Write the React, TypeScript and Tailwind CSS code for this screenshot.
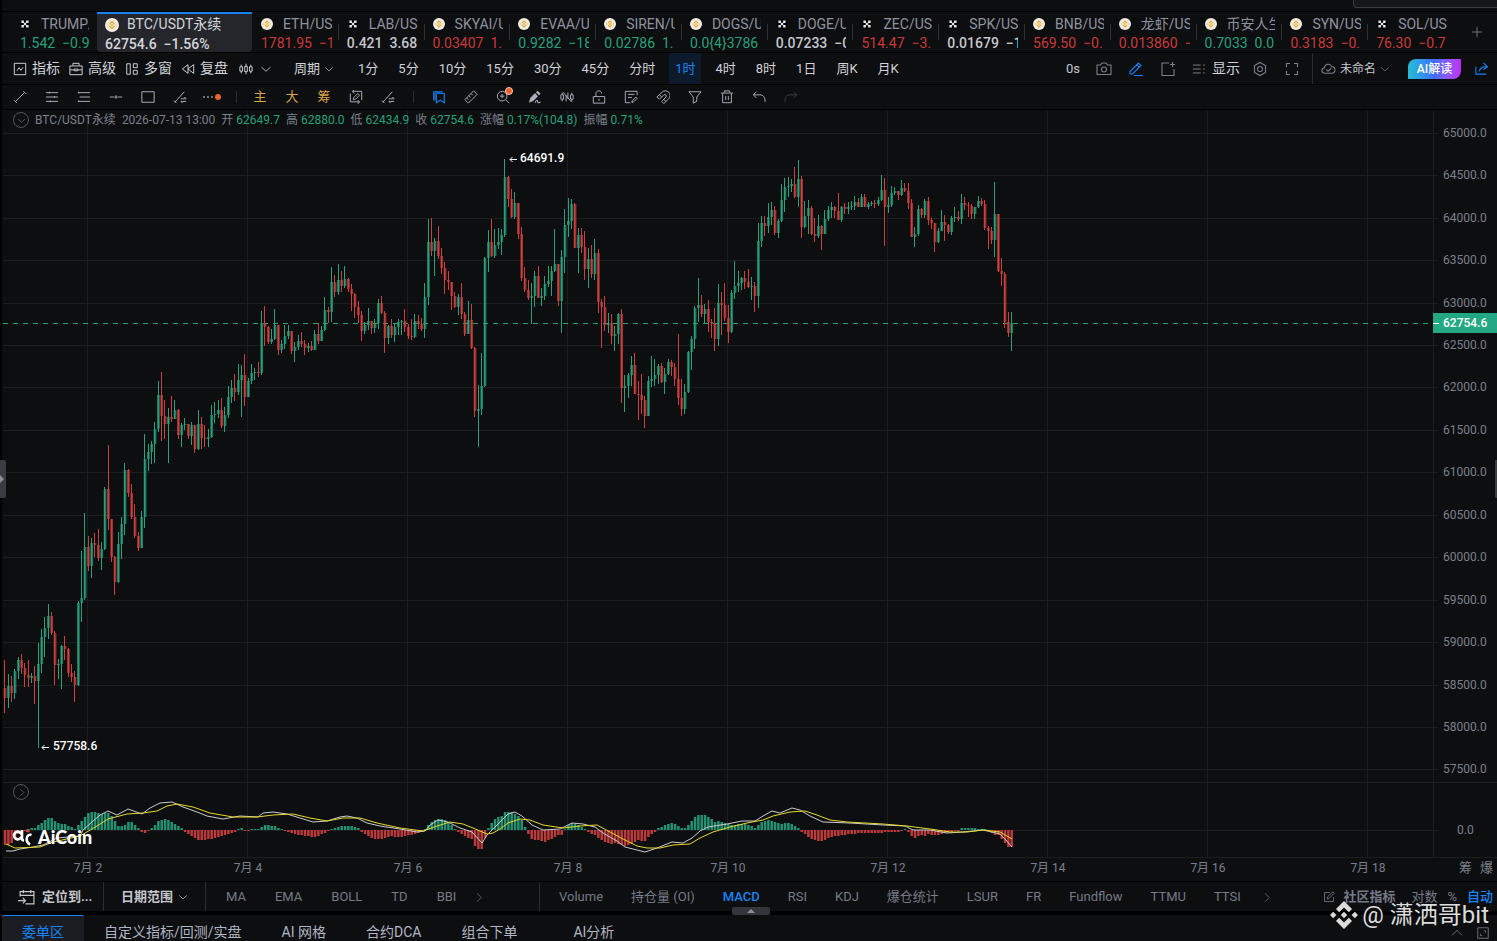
import React from 'react';
import clsx from 'clsx';

const UP = '#26a17b';
const DOWN = '#cf3f3f';
const GRID = '#1b1d20';

// close, high, low of every hourly candle on the plot's y axis; each candle opens at the previous close
const FIRST_OPEN = 688;
const CANDLES = [
  698, 660, 713, 686, 674, 708, 693, 676, 702, 671, 669, 699, 660, 657, 679, 668, 654, 674, 675, 663, 687, 678, 660, 687,
  676, 673, 683, 681, 666, 704, 664, 643, 748, 637, 629, 673, 628, 617, 657, 616, 604, 639, 633, 612, 635, 665, 631, 685,
  664, 659, 679, 646, 645, 689, 649, 636, 660, 673, 648, 677, 677, 664, 682, 685, 671, 702, 603, 601, 686, 598, 551, 622,
  547, 513, 600, 566, 536, 571, 543, 538, 578, 545, 533, 557, 558, 529, 561, 549, 542, 570, 489, 487, 550, 519, 445, 530,
  557, 519, 562, 582, 556, 595, 544, 532, 583, 524, 517, 559, 470, 463, 535, 493, 469, 497, 517, 484, 519, 536, 504, 538,
  548, 532, 551, 517, 511, 548, 459, 434, 528, 452, 444, 471, 444, 441, 464, 429, 422, 463, 395, 381, 432, 416, 372, 441,
  424, 400, 439, 417, 408, 463, 419, 396, 422, 410, 400, 419, 435, 409, 439, 425, 423, 447, 424, 418, 430, 436, 424, 439,
  425, 422, 445, 449, 425, 453, 424, 410, 450, 438, 417, 449, 439, 425, 447, 437, 429, 447, 415, 405, 438, 414, 402, 423,
  410, 400, 418, 426, 398, 428, 415, 407, 432, 397, 386, 418, 388, 380, 403, 392, 374, 401, 380, 364, 395, 375, 365, 417,
  397, 354, 406, 381, 378, 397, 373, 364, 384, 372, 368, 380, 373, 362, 377, 323, 311, 375, 327, 306, 346, 342, 326, 344,
  339, 329, 344, 325, 309, 340, 350, 325, 355, 344, 340, 353, 336, 325, 349, 331, 325, 339, 351, 331, 354, 347, 342, 362,
  341, 335, 350, 344, 332, 347, 348, 340, 355, 346, 343, 352, 350, 341, 351, 334, 330, 350, 341, 323, 344, 330, 326, 341,
  310, 297, 331, 312, 307, 323, 282, 267, 322, 292, 275, 297, 280, 264, 295, 286, 271, 292, 279, 266, 288, 289, 278, 292,
  294, 284, 311, 307, 293, 318, 315, 301, 323, 331, 311, 341, 325, 322, 334, 321, 308, 330, 328, 321, 334, 323, 319, 333,
  303, 299, 329, 313, 296, 314, 338, 311, 353, 326, 325, 344, 335, 319, 338, 327, 323, 342, 322, 319, 335, 321, 320, 335,
  327, 309, 332, 336, 324, 339, 337, 319, 340, 321, 314, 338, 324, 315, 329, 329, 318, 331, 297, 283, 338, 242, 219, 305,
  251, 218, 256, 241, 238, 276, 256, 226, 259, 268, 248, 274, 280, 262, 294, 282, 271, 290, 296, 282, 310, 307, 292, 308,
  297, 294, 315, 314, 283, 319, 334, 312, 336, 320, 301, 334, 348, 304, 349, 411, 347, 417, 409, 385, 447, 386, 353, 415,
  258, 257, 387, 242, 230, 272, 256, 219, 257, 245, 229, 258, 242, 228, 249, 235, 229, 255, 177, 159, 237, 199, 176, 207,
  217, 189, 218, 203, 192, 219, 234, 203, 239, 278, 227, 281, 290, 267, 292, 298, 280, 300, 296, 283, 324, 276, 271, 307,
  298, 266, 298, 296, 288, 306, 284, 276, 300, 281, 266, 287, 271, 266, 296, 264, 229, 272, 301, 264, 306, 257, 250, 333,
  225, 209, 273, 221, 198, 237, 204, 199, 229, 248, 203, 248, 235, 228, 273, 247, 228, 253, 269, 231, 280, 259, 248, 288,
  274, 245, 278, 253, 239, 280, 302, 249, 313, 307, 299, 348, 325, 296, 331, 323, 313, 333, 336, 314, 344, 334, 326, 351,
  314, 313, 344, 388, 309, 403, 386, 375, 412, 375, 373, 398, 365, 356, 386, 394, 353, 394, 395, 381, 420, 400, 374, 414,
  416, 396, 428, 381, 376, 416, 379, 356, 387, 375, 359, 386, 366, 364, 384, 382, 363, 383, 374, 368, 394, 362, 359, 375,
  367, 360, 376, 379, 363, 386, 398, 334, 405, 409, 379, 416, 392, 384, 414, 352, 351, 393, 339, 336, 370, 308, 306, 349,
  305, 278, 322, 314, 295, 317, 309, 304, 324, 322, 300, 332, 324, 319, 338, 339, 308, 351, 303, 284, 346, 305, 292, 335,
  318, 283, 321, 332, 305, 343, 293, 290, 333, 286, 261, 299, 283, 271, 292, 278, 277, 290, 282, 271, 289, 287, 269, 288,
  286, 277, 300, 296, 282, 312, 241, 223, 308, 223, 216, 247, 226, 216, 236, 217, 203, 233, 210, 202, 225, 233, 206, 235,
  221, 219, 238, 200, 184, 222, 187, 178, 212, 186, 177, 197, 184, 179, 192, 197, 167, 198, 179, 160, 207, 227, 176, 238,
  216, 201, 228, 208, 200, 234, 234, 206, 235, 236, 218, 242, 226, 215, 238, 234, 225, 250, 219, 210, 234, 210, 206, 221,
  207, 202, 218, 211, 206, 218, 220, 193, 220, 207, 206, 222, 209, 203, 214, 207, 202, 214, 206, 201, 210, 202, 196, 210,
  207, 198, 207, 197, 194, 207, 207, 194, 207, 204, 202, 209, 203, 201, 206, 204, 200, 208, 200, 197, 206, 190, 175, 201,
  207, 178, 246, 205, 197, 213, 193, 186, 207, 191, 187, 195, 195, 191, 200, 188, 180, 196, 191, 183, 192, 203, 183, 209,
  237, 199, 237, 234, 227, 247, 209, 205, 236, 215, 208, 218, 201, 199, 218, 220, 197, 225, 223, 218, 229, 242, 223, 252,
  231, 228, 243, 222, 210, 231, 225, 215, 241, 232, 224, 234, 218, 216, 235, 217, 207, 222, 219, 211, 221, 203, 194, 224,
  205, 197, 210, 206, 202, 217, 214, 204, 219, 207, 207, 219, 201, 196, 208, 204, 198, 206, 228, 200, 230, 231, 226, 249,
  240, 227, 244, 214, 182, 257, 271, 214, 272, 274, 258, 286, 322, 272, 328, 333, 312, 337, 323, 312, 351,
];

const HISTOGRAM = [
  -15, -15, -13, -8, -4, -2, -1, 1, 2, 2, 5, 7, 10, 12, 12, 9, 7, 6, 6, 4, 3, 1, 5, 9, 13, 17, 18, 18, 17, 16, 17, 17,
  14, 9, 4, 4, 5, 8, 8, 5, 2, -2, -3, -1, 2, 5, 9, 10, 11, 10, 8, 6, 4, 2, -2, -4, -6, -8, -10, -10, -10, -9, -9, -8,
  -7, -6, -5, -4, -3, -2, 1, 2, -1, -1, 1, 1, 1, 3, 5, 5, 4, 4, 2, 1, -1, -2, -3, -4, -5, -5, -6, -6, -7, -7, -6, -4,
  -3, -1, 1, 2, 3, 4, 4, 4, 4, 3, 2, -2, -4, -6, -8, -9, -9, -9, -8, -7, -6, -7, -7, -7, -6, -5, -5, -4, -3, -2, 1, 5,
  8, 10, 11, 11, 10, 8, 5, 1, -2, -4, -6, -8, -9, -16, -19, -19, -8, 2, 7, 11, 13, 14, 18, 18, 18, 16, 14, 10, 3, -4,
  -9, -10, -10, -11, -12, -10, -9, -7, -5, -5, 1, 5, 7, 6, 5, 3, 1, -2, -4, -5, -8, -10, -12, -13, -14, -13, -14, -15,
  -16, -15, -14, -12, -10, -11, -11, -7, -4, -2, 2, 3, 5, 6, 7, 6, 4, 2, 2, 5, 9, 13, 15, 15, 15, 13, 11, 8, 9, 8, 7,
  6, 5, 5, 6, 6, 6, 5, 4, 2, 5, 8, 9, 10, 9, 8, 7, 6, 7, 7, 6, 4, 2, -2, -4, -7, -9, -10, -11, -11, -10, -8, -7, -6,
  -6, -5, -5, -4, -4, -4, -3, -3, -3, -3, -3, -3, -3, -3, -2, -2, -2, -2, -2, -1, 1, -2, -6, -8, -6, -5, -6, -4, -5,
  -5, -5, -4, -3, -2, -2, -1, -1, 2, 2, 2, 2, 2, 1, 1, 1, -1, -3, -5, -5, -9, -13, -17, -17,
];

const DIF =
  '6,851 13,851 20,849 33,847 43,845 57,838 80,836 83,830 92,822 100,815 108,811 117,815 128,809 142,814 150,808 160,803 172,802 183,807 197,812 207,816 223,819 240,816 258,817 263,813 273,812 287,814 300,818 313,822 327,821 340,817 347,816 357,818 367,823 380,826 400,829 417,832 425,831 430,825 438,820 448,822 460,828 472,832 482,843 487,835 500,822 508,814 515,812 522,816 532,825 543,830 560,829 572,823 583,824 595,827 603,833 617,841 625,847 637,850 645,852 657,848 672,842 683,843 692,838 700,831 708,827 727,824 742,821 755,821 763,816 772,811 780,813 792,808 800,810 810,816 823,822 850,823 883,825 905,826 913,830 930,830 947,833 963,832 983,830 1000,834 1005,839 1012,847';
const DEA =
  '6,844 15,848 40,847 53,842 80,836 97,826 108,819 127,814 143,813 157,811 167,806 177,804 193,807 210,813 233,817 257,817 273,815 293,814 310,818 327,821 343,818 360,818 377,823 400,828 423,831 437,826 450,822 463,824 473,828 487,834 493,833 500,829 508,823 520,819 530,820 543,825 563,828 580,826 597,825 610,832 623,839 637,846 647,848 660,848 673,845 690,844 700,838 713,832 730,827 747,823 763,820 773,816 790,812 805,811 817,815 830,820 847,822 883,824 907,826 930,829 950,832 967,832 983,830 1000,832 1012,839';

const PRICES = Array.from({ length: 16 }, (_, i) => 65000 - i * 500);
const priceY = (price: number) => Math.round(132.79 + (65000 - price) * 0.08488);
const DAYS = [2, 4, 6, 8, 10, 12, 14, 16, 18];

const TICKERS = [
  { name: 'ETH/US', price: '1781.95', change: '−1', tone: 'down', okx: false },
  { name: 'LAB/US', price: '0.421', change: '3.68', tone: 'flat', okx: true },
  { name: 'SKYAI/U', price: '0.03407', change: '1.', tone: 'down', okx: false },
  { name: 'EVAA/U', price: '0.9282', change: '−18', tone: 'up', okx: false },
  { name: 'SIREN/U', price: '0.02786', change: '1.', tone: 'up', okx: false },
  { name: 'DOGS/U', price: '0.0{4}3786', change: '', tone: 'up', okx: false },
  { name: 'DOGE/U', price: '0.07233', change: '−0', tone: 'flat', okx: true },
  { name: 'ZEC/US', price: '514.47', change: '−3.', tone: 'down', okx: true },
  { name: 'SPK/US', price: '0.01679', change: '−1', tone: 'flat', okx: true },
  { name: 'BNB/US', price: '569.50', change: '−0.', tone: 'down', okx: false },
  { name: '龙虾/US', price: '0.013860', change: '−', tone: 'down', okx: false },
  { name: '币安人生', price: '0.7033', change: '0.0', tone: 'up', okx: false },
  { name: 'SYN/US', price: '0.3183', change: '−0.', tone: 'down', okx: false },
  { name: 'SOL/US', price: '76.30', change: '−0.7', tone: 'down', okx: true },
];

const INTERVALS = ['1分', '5分', '10分', '15分', '30分', '45分', '分时', '1时', '4时', '8时', '1日', '周K', '月K'];

const ICONS = {
  trend: 'M3 13 13 3M1 11.500l3.500 3.500M11.500 1 15 4.500',
  hlines: 'M1 3h14M1 8h14M1 13h14M5 2v2M11 7v2M6 12v2',
  hlinesLeft: 'M1 3h14M3 8h12M1 13h14M2 2v2M2 12v2',
  hline: 'M1 8h5M10 8h5M6.500 8h3M8 6v4',
  rect: 'M1 2h14v12H1z',
  pitch: 'M2 14 13 2M1 12l3 3M9 10h6l-2-2M15 13H9l2 2',
  swap: 'M4 1.500h10.500v10M12 13.500H1.500V4M4 1.500 6 0M4 1.500 6 4M12 13.500 10 16M12 13.500 10 11.500M5 11l.5-2.500L10 4l2 2-4.500 4.500z',
  ruler: 'M1 11 11 1l4 4L5 15zM8 4l2 2M5.500 6.500l2 2M3 9l2 2',
  zoomIn: 'M7 1.500a5.500 5.500 0 1 0 0 11 5.500 5.500 0 0 0 0-11zM11 11l4 4M7 4.500v5M4.500 7h5',
  hideCandles: 'M2.500 3v2.500M2.500 10.500V13M1 5.500h3v5H1zM13.500 3v2.500M13.500 10.500V13M12 5.500h3v5h-3zM7 6v7M9 3v7M3.500 2.500 13 13.500',
  lock: 'M1.500 7.500h13v7.500h-13zM4.500 7V4C4.500 0 11 0 11 4M8 10v2.500',
  note: 'M15 6V1.500H1.500v13H7M4.500 5h7.500M4.500 8.500H9M9 14.500l.5-2.500 4-4 1.500 1.500-4 4z',
  magnet: 'M1 8l6-5.500a5.300 5.300 0 0 1 7.500 7.500L9 15.500 6.500 13l5-5a1.800 1.800 0 0 0-2.500-2.500l-5 5zM4 5.500 6.500 8M8.500 10.500l3 2.500',
  filter: 'M1 2h14l-5 6v5l-4 2V8z',
  trash: 'M1 3.500h14M5 3V1h6v2M3 4v10.500h10V4M6.500 7v4.500M9.500 7v4.500',
  undo: 'M5 2 1.500 5.500 5 9M2 5.500h7c4 0 6 3 6 8',
  redo: 'M11 2l3.500 3.500L11 9M14 5.500H7c-4 0-6 3-6 8',
  indicator: 'M1.500 1.500h13v13h-13zM4.500 10 7 6.500l2 3L11.500 6',
  briefcase: 'M1 4.500h14V14.500H1zM4.500 4V1.500h7V4M1 9h5M10 9h5M6 8h4v2H6z',
  windows: 'M2 2h4v12H2zM9.500 2h4.500v4.500H9.500zM9.500 9.500h4.500V14H9.500z',
  rewind: 'M8 3 1.500 8 8 13zM14.500 3 8 8l6.500 5z',
  candles: 'M2.500 3v2.500M2.500 10.500V13M1 5.500h3v5H1zM8 2v3M8 11v3M6.500 5h3v6h-3zM13.500 3v2.500M13.500 10.500V13M12 5.500h3v5h-3z',
  down: 'M2 5.500 8 11l6-5.500',
  right: 'M6 2l6 6-6 6',
  up: 'M1.500 11 8 4.500l6.500 6.500',
  camera: 'M1 4h3.500L6 2h4l1.500 2H15v9.500H1zM8 6a2.500 2.500 0 1 0 0 5 2.500 2.500 0 0 0 0-5z',
  pen: 'M2 10.500 10.500 2 13 4.500 4.500 13H2zM6 14.500h9M9 4l2 2',
  addNote: 'M9 2H2v12.500h12V8M12.500 1v5M10 3.500h5',
  list: 'M1 3.500h9M1 8h9M1 12.500h9M12.500 3.500h2M12.500 8h2M12.500 12.500h2',
  hexagon: 'M8 1.500 13.500 4.500v7L8 14.500l-5.500-3v-7zM8 5.500a2.500 2.500 0 1 0 0 5 2.500 2.500 0 0 0 0-5z',
  expand: 'M2.500 6V2.500H6M10 2.500h3.500V6M13.500 10v3.500H10M6 13.500H2.500V10',
  cloud: 'M4 13C0 13 0 8 3.500 7.500 4 3 9.500 2 11.500 6c4.500 0 4.500 7 0 7zM5.500 9l2 2L11 7.500',
  share: 'M2 6v8h11M10 2l4.500 4L10 9.500M14 6C9 6 6.500 7 5.500 11',
  calendar: 'M2 7V2.500h13V14H7M2 6h13M5 1v3M12 1v3M0 11h7M4.500 8.500 7 11l-2.500 2.500',
  edit: 'M9 2H2v12h12V8M5.500 10.500 6 8l7-7 2 2-7 7z',
  fullBox: 'M1 1h14v14H1zM9 5h2.500v2.500M7 11.500H4.500V9',
  plus: 'M8 1v14M1 8h14',
};

interface IconProps {
  name: keyof typeof ICONS;
  className?: string;
}

function Icon({ name, className }: IconProps) {
  return (
    <svg viewBox="0 0 16 16" className={clsx('shrink-0', className ?? 'size-[14px]')} fill="none" stroke="currentColor" strokeWidth="1.100">
      <path d={ICONS[name]} />
    </svg>
  );
}

function CoinIcon({ okx, className }: { okx: boolean; className: string }) {
  if (okx) {
    return (
      <svg viewBox="0 0 14 14" className={className}>
        <circle cx="7" cy="7" r="7" fill="#000" />
        <path d="M2 2h3.500v3.500H2zM8.500 2H12v3.500H8.500zM5.300 5.300h3.400v3.400H5.300zM2 8.500h3.500V12H2zM8.500 8.500H12V12H8.500z" fill="#e8e8e8" />
      </svg>
    );
  }
  return (
    <svg viewBox="0 0 14 14" className={className}>
      <circle cx="7" cy="7" r="7" fill="#f1ece2" />
      <path d="M4.500 6 7 3.500 9.500 6M4.500 8 7 10.500 9.500 8" fill="none" stroke="#e9a92b" strokeWidth="1.300" />
      <path d="M7 5.700 8.300 7 7 8.300 5.700 7zM3.200 6.200l.8.800-.8.800-.8-.8zM10.800 6.200l.8.800-.8.800-.8-.8z" fill="#e9a92b" />
    </svg>
  );
}

function TickerTabs() {
  return (
    <nav className="flex h-10 bg-[#0d0e10]">
      <button className="flex w-[95px] shrink-0 flex-col pt-[2px] pl-[18px] text-left">
        <span className="flex h-5 w-[69px] items-center gap-[11px] overflow-hidden whitespace-nowrap text-[#8d939e]">
          <CoinIcon okx className="size-[10px] shrink-0" />
          TRUMP/
        </span>
        <span className="h-[18px] w-[69px] overflow-hidden whitespace-pre leading-[18px] text-[#26a17b]">1.542  −0.9</span>
      </button>
      <button className="flex w-[155px] shrink-0 flex-col rounded-b border-t-2 border-[#1784f5] bg-[#25262b] pl-2 text-left text-[#d3d6db]">
        <span className="flex h-[21px] items-center gap-2 whitespace-nowrap">
          <CoinIcon okx={false} className="size-[14px] shrink-0" />
          BTC/USDT永续
        </span>
        <span className="h-[18px] whitespace-pre font-medium leading-[18px]">62754.6  −1.56%</span>
      </button>
      {TICKERS.map((t, i) => (
        <button key={t.name} className="relative flex min-w-0 flex-1 flex-col pt-[2px] pr-[6px] pl-[9px] text-left">
          {i > 0 && <span className="absolute top-3 left-0 h-4 w-px bg-[#303238]" />}
          <span
            className={clsx('flex h-5 w-full items-center overflow-hidden whitespace-nowrap text-[#8d939e]', t.okx ? 'gap-[11px] pl-px' : 'gap-[10px]')}
          >
            <CoinIcon okx={t.okx} className={t.okx ? 'size-[10px] shrink-0' : 'size-3 shrink-0'} />
            {t.name}
          </span>
          <span
            className={clsx('h-[18px] w-full overflow-hidden whitespace-pre leading-[18px]', {
              'text-[#26a17b]': t.tone === 'up',
              'text-[#c93a3a]': t.tone === 'down',
              'font-medium text-[#c4c7cc]': t.tone === 'flat',
            })}
          >
            {t.price}
            {'  '}
            {t.change}
          </span>
        </button>
      ))}
      <button aria-label="添加" className="flex w-11 shrink-0 items-center justify-center pl-1 text-[#7b808a]">
        <Icon name="plus" className="size-3" />
      </button>
    </nav>
  );
}

function ToolButton({ icon, label }: { icon: keyof typeof ICONS; label: string }) {
  return (
    <button className="flex items-center gap-[5px]">
      <Icon name={icon} />
      {label}
    </button>
  );
}

function MainToolbar() {
  return (
    <div className="mt-px flex h-[31px] items-center bg-[#0d0e10] text-[14px] text-[#d0d3d8]">
      <div className="flex w-[226px] shrink-0 justify-between pl-[11px]">
        <ToolButton icon="indicator" label="指标" />
        <ToolButton icon="briefcase" label="高级" />
        <ToolButton icon="windows" label="多窗" />
        <ToolButton icon="rewind" label="复盘" />
      </div>
      <button aria-label="K线" className="ml-[11px] flex items-center gap-[7px]">
        <Icon name="candles" />
        <Icon name="down" className="size-3" />
      </button>
      <button className="ml-[22px] flex items-center gap-1 text-[13px]">
        周期
        <Icon name="down" className="size-[10px]" />
      </button>
      <div className="ml-[18px] flex h-full gap-2 text-[13px]">
        {INTERVALS.map((label) => (
          <button key={label} className={clsx('h-full shrink-0 px-[6px]', label === '1时' && 'bg-[#0d1a2b] text-[#1784f5]')}>
            {label}
          </button>
        ))}
      </div>
      <div className="ml-auto flex h-full items-center text-[#7b808a]">
        <span className="mr-4 text-[13px] text-[#c4c7cc]">0s</span>
        <Icon name="camera" className="mr-4 size-4" />
        <Icon name="pen" className="mr-4 size-4 text-[#1784f5]" />
        <Icon name="addNote" className="mr-4 size-4" />
        <button className="flex items-center gap-[6px] text-[14px] text-[#d0d3d8]">
          <Icon name="list" className="size-[14px] text-[#7b808a]" />
          显示
        </button>
        <Icon name="hexagon" className="ml-3 size-4" />
        <Icon name="expand" className="mr-3 ml-4 size-4" />
        <button className="flex h-full items-center gap-1 border-l border-[#2b2d32] pl-2 text-[12px] text-[#c4c7cc]">
          <Icon name="cloud" className="size-[15px] text-[#7b808a]" />
          未命名
          <Icon name="down" className="size-[10px] text-[#7b808a]" />
        </button>
        <button className="ml-[18px] h-5 w-[53px] rounded-tl-lg rounded-br-lg bg-linear-to-r from-[#26bcd4] via-[#3d6dfa] to-[#c02af5] text-[12px] font-medium text-white">
          AI解读
        </button>
        <Icon name="share" className="mr-2 ml-[13px] size-[15px] text-[#1784f5]" />
      </div>
    </div>
  );
}

function Cell({ icon, className }: { icon: keyof typeof ICONS; className?: string }) {
  return (
    <button aria-label={icon} className={clsx('flex w-8 shrink-0 items-center justify-center', className)}>
      <Icon name={icon} />
    </button>
  );
}

function DrawingToolbar() {
  return (
    <div className="mt-px flex h-6 items-center bg-[#0d0e10] pl-[2px] text-[#a9afba]">
      <Cell icon="trend" />
      <Cell icon="hlines" />
      <Cell icon="hlinesLeft" />
      <Cell icon="hline" />
      <Cell icon="rect" />
      <Cell icon="pitch" />
      <button aria-label="更多" className="flex w-8 shrink-0 items-center justify-center gap-[2px]">
        <span className="size-[2px] bg-[#6b7078]" />
        <span className="size-[2px] bg-[#6b7078]" />
        <span className="size-[2px] bg-[#6b7078]" />
        <span className="size-[6px] rounded-full bg-[#e8622c]" />
      </button>
      <span className="flex w-4 shrink-0 justify-center">
        <span className="h-3 w-px bg-[#2b2d32]" />
      </span>
      {['主', '大', '筹'].map((label) => (
        <button key={label} className="w-8 shrink-0 text-center text-[13px] text-[#d9a24e]">
          {label}
        </button>
      ))}
      <Cell icon="swap" />
      <Cell icon="pitch" />
      <span className="flex w-[19px] shrink-0 justify-center">
        <span className="h-3 w-px bg-[#2b2d32]" />
      </span>
      <button aria-label="收藏" className="flex w-8 shrink-0 items-center justify-center">
        <svg viewBox="0 0 16 16" className="size-[14px]" fill="none" stroke="#1784f5" strokeWidth="1.300">
          <path d="M2 12V2h10M5 4h9v10.500l-4.500-3-4.500 3z" />
          <path d="M2 2h10v2H5v8H2z" fill="#125aa5" stroke="none" />
        </svg>
      </button>
      <Cell icon="ruler" />
      <button aria-label="放大" className="relative flex w-8 shrink-0 items-center justify-center">
        <Icon name="zoomIn" />
        <span className="absolute -top-[3px] right-[6px] size-2 rounded-full border border-[#f3c9b5] bg-[#e8622c]" />
      </button>
      <button aria-label="画笔" className="flex w-8 shrink-0 items-center justify-center">
        <svg viewBox="0 0 16 16" className="size-[14px]" fill="currentColor">
          <path d="M1 14.500 2.500 9 8 3.500 11.500 7 6 12.500zM9 2.500 11 .8l3.500 3.400L12.500 6z" />
          <path d="M8 14.500c2-4 3-3 3-1s2 1 3.500 0" fill="none" stroke="currentColor" strokeWidth="1.200" />
        </svg>
      </button>
      <Cell icon="hideCandles" />
      <Cell icon="lock" />
      <Cell icon="note" />
      <Cell icon="magnet" />
      <Cell icon="filter" />
      <Cell icon="trash" />
      <Cell icon="undo" />
      <Cell icon="redo" className="text-[#3c3f45]" />
    </div>
  );
}

function Candles() {
  const items: React.ReactNode[] = [];
  let open = FIRST_OPEN;
  for (let i = 0; i * 3 < CANDLES.length; i++) {
    const [close, high, low] = CANDLES.slice(i * 3, i * 3 + 3);
    const x = Math.floor(4.7 + (i * 10) / 3);
    const fill = close < open ? UP : DOWN;
    const top = Math.min(open, close);
    items.push(
      <g key={i} fill={fill}>
        <rect x={3.7 + (i * 10) / 3} y={top} width="2.700" height={Math.max(1, Math.abs(close - open))} fillOpacity="0.75" />
        <rect x={x} y={high} width="1" height={low - high} />
      </g>,
    );
    open = close;
  }
  return <>{items}</>;
}

function Chart() {
  return (
    <section className="relative mt-px flex h-[771px] bg-[#0d0e10]">
      <svg className="h-full min-w-0 flex-1">
        <g transform="translate(-2 -110)">
          <g fill={GRID}>
            {PRICES.map((p) => (
              <rect key={p} x="3" y={priceY(p)} width="100%" height="1" />
            ))}
            {DAYS.map((d, i) => (
              <rect key={d} x={87 + i * 160} y="111" width="1" height="746" />
            ))}
            <rect x="3" y="782" width="100%" height="1" />
            <rect x="3" y="830" width="100%" height="1" />
            <rect x="3" y="857" width="100%" height="1" />
          </g>
          <path d="M3 323.500H1500" stroke={UP} strokeDasharray="5 5" />
          <Candles />
          {HISTOGRAM.map((v, i) => (
            <rect
              key={i}
              x={3.8 + (i * 10) / 3}
              y={v > 0 ? 830 - v : 830}
              width="2.500"
              height={Math.abs(v)}
              fill={v > 0 ? UP : DOWN}
              fillOpacity="0.9"
            />
          ))}
          <polyline points={DIF} fill="none" stroke="#c9cbd0" />
          <polyline points={DEA} fill="none" stroke="#e6d92c" />
          <g className="text-[12px] font-medium" fill="#fff">
            <path d="M510 159.500h7M512.500 157l-2.500 2.500 2.500 2.500M42 747.500h7M44.500 745l-2.500 2.500 2.500 2.500" fill="none" stroke="#fff" />
            <text x="520" y="162">64691.9</text>
            <text x="53" y="750">57758.6</text>
          </g>
          <g className="text-[12px]" fill="#7b808c" textAnchor="middle">
            {DAYS.map((d, i) => (
              <text key={d} x={88 + i * 160} y="872">
                7月 {d}
              </text>
            ))}
          </g>
        </g>
      </svg>

      <aside className="relative w-16 shrink-0 text-[12px] text-[#7b808c]">
        <svg className="h-full w-full">
          <g transform="translate(0 -110)">
            <g fill={GRID}>
              <rect x="0" y="111" width="1" height="746" />
              <rect x="0" y="782" width="64" height="1" />
              <rect x="0" y="857" width="64" height="1" />
              <rect x="0" y="830" width="6" height="1" />
              {PRICES.map((p) => (
                <rect key={p} x="0" y={priceY(p)} width="5" height="1" />
              ))}
            </g>
            <g fill="#7b808c">
              {PRICES.map((p) => (
                <text key={p} x="10" y={priceY(p) + 4}>
                  {p.toFixed(1)}
                </text>
              ))}
              <text x="24" y="834">0.0</text>
            </g>
          </g>
        </svg>
        <div className="absolute top-[203px] left-0 flex h-5 w-full items-center gap-1 bg-[#22a882] font-medium text-white">
          <span className="h-px w-[6px] bg-white" />
          62754.6
        </div>
        <div className="absolute right-1 bottom-1 flex gap-2 text-[13px]">
          <button>筹</button>
          <button>爆</button>
        </div>
      </aside>

      <div className="absolute top-0 left-[11px] flex h-5 items-center gap-[6px] whitespace-nowrap text-[12px] text-[#7b808c]">
        <RoundToggle icon="down" />
        <span>BTC/USDT永续</span>
        <span>2026-07-13 13:00</span>
        <Stat label="开" value="62649.7" />
        <Stat label="高" value="62880.0" />
        <Stat label="低" value="62434.9" />
        <Stat label="收" value="62754.6" />
        <Stat label="涨幅" value="0.17%(104.8)" />
        <Stat label="振幅" value="0.71%" />
      </div>
      <div className="absolute top-[674px] left-[11px]">
        <RoundToggle icon="right" />
      </div>

      <div className="absolute top-[717px] left-[10px] flex items-center gap-[6px] text-white">
        <svg viewBox="0 0 20 18" className="h-[18px] w-5" fill="none" stroke="currentColor" strokeWidth="2.600">
          <path d="M10 2v8.500c0 1.500 1 2 2 2M9.500 6.500a3.800 3.800 0 1 0 0 2" />
          <path d="M19.500 7c-5-2-7 6.500-1.500 9.500" />
          <path d="M14 3h3.500" stroke="#d9432f" />
        </svg>
        <span className="font-[Lato,sans-serif] text-[18px] font-black leading-5">AiCoin</span>
      </div>
    </section>
  );
}

function RoundToggle({ icon }: { icon: 'down' | 'right' }) {
  return (
    <button aria-label="展开" className="flex size-4 items-center justify-center rounded-full border border-[#50545c] text-[#7b808c]">
      <Icon name={icon} className="size-[9px]" />
    </button>
  );
}

function Stat({ label, value }: { label: string; value: string }) {
  return (
    <span>
      {label} <span className="text-[#26a17b]">{value}</span>
    </span>
  );
}

function IndicatorBar() {
  return (
    <div className="relative mt-px flex h-[29px] items-center bg-[#0d0e10] text-[13px] whitespace-nowrap text-[#747a86]">
      <button className="flex h-full w-[102px] shrink-0 items-center gap-[7px] border-r border-[#2b2d32] pt-px pl-4 font-bold text-[#c4c7cc]">
        <Icon name="calendar" className="size-[17px]" />
        定位到...
      </button>
      <button className="flex h-full w-[102px] shrink-0 items-center gap-[5px] border-r border-[#2b2d32] pt-px pl-[17px] font-bold text-[#c4c7cc]">
        日期范围
        <Icon name="down" className="size-[10px]" />
      </button>
      <div className="flex h-full w-[334px] shrink-0 items-center gap-[29px] border-r border-[#2b2d32] pt-px pl-5">
        {['MA', 'EMA', 'BOLL', 'TD', 'BBI'].map((label) => (
          <button key={label}>{label}</button>
        ))}
        <Icon name="right" className="-ml-3 size-[11px]" />
      </div>
      <div className="flex h-full items-center gap-7 pt-px pl-[19px]">
        {['Volume', '持仓量 (OI)', 'MACD', 'RSI', 'KDJ', '爆仓统计', 'LSUR', 'FR', 'Fundflow', 'TTMU', 'TTSI'].map((label) => (
          <button key={label} className={clsx(label === 'MACD' && 'font-medium text-[#1784f5]')}>
            {label}
          </button>
        ))}
        <Icon name="right" className="-ml-2 size-[11px]" />
      </div>
      <div className="ml-auto flex h-full items-center pt-px pr-1">
        <button className="flex items-center gap-2 font-bold">
          <Icon name="edit" className="size-3" />
          社区指标
        </button>
        <button className="ml-4">对数</button>
        <button className="ml-[10px]">%</button>
        <button className="ml-[10px] font-medium text-[#1784f5]">自动</button>
      </div>
      <button aria-label="收起" className="absolute top-[25px] left-[730px] z-10 flex h-2 w-[38px] items-center justify-center rounded-xs bg-[#34363b]">
        <svg viewBox="0 0 8 4" className="h-1 w-2" fill="#8a8f99">
          <path d="M0 4 4 0l4 4z" />
        </svg>
      </button>
    </div>
  );
}

function BottomTabs() {
  return (
    <nav className="mt-1 flex h-[26px] bg-[#0d0e10] text-[14px] whitespace-nowrap text-[#b0b6c1]">
      <button className="w-[82px] shrink-0 rounded-t-xs border-t border-[#1784f5] bg-[#1b1d22] pt-[6px] text-[#1784f5]">委单区</button>
      <div className="flex gap-10 overflow-hidden pt-[7px] pl-5">
        <button>自定义指标/回测/实盘</button>
        <button>AI 网格</button>
        <button>合约DCA</button>
        <button>组合下单</button>
        <button className="ml-4">AI分析</button>
      </div>
      <div className="ml-auto flex items-end gap-[14px] pr-2 pb-[2px] text-[#7b808a]">
        <Icon name="up" className="size-3" />
        <Icon name="fullBox" className="size-3" />
      </div>
    </nav>
  );
}

function Watermark() {
  return (
    <div className="absolute right-2 bottom-2 flex items-center gap-1 text-[24px] leading-9 text-[#dcdcdc]">
      <svg viewBox="0 0 28 28" className="size-7" fill="currentColor">
        <path d="M14 0l8 8-3.200 3.200L14 6.400l-4.800 4.800L6 8zM14 28l8-8-3.200-3.200L14 21.600l-4.800-4.800L6 20zM3.200 10.800 6.400 14l-3.200 3.200L0 14zM24.800 10.800 28 14l-3.200 3.200L21.600 14zM14 10.800l3.200 3.200-3.200 3.200-3.200-3.200z" />
      </svg>
      <span>@ 潇洒哥bit</span>
    </div>
  );
}

export default function App() {
  return (
    <div className="relative overflow-hidden bg-black pl-[2px] font-[Roboto,'Noto_Sans_CJK_SC',sans-serif] text-[14px]">
      <div className="mb-px flex h-[11px] justify-end bg-[#0d0e10]">
        <div className="h-2 w-36 rounded-bl border-b border-l border-[#3a3c42] bg-[#15171a]" />
      </div>
      <TickerTabs />
      <MainToolbar />
      <DrawingToolbar />
      <Chart />
      <IndicatorBar />
      <BottomTabs />
      <button aria-label="展开侧栏" className="absolute top-[460px] left-0 flex h-[38px] w-[6px] items-center rounded-r-xs bg-[#3a3c42]">
        <svg viewBox="0 0 4 8" className="h-2 w-1" fill="#8a8f99">
          <path d="M0 0l4 4-4 4z" />
        </svg>
      </button>
      <div className="absolute top-[460px] right-0 h-[38px] w-[2px] bg-[#3a3c42]" />
      <Watermark />
    </div>
  );
}
